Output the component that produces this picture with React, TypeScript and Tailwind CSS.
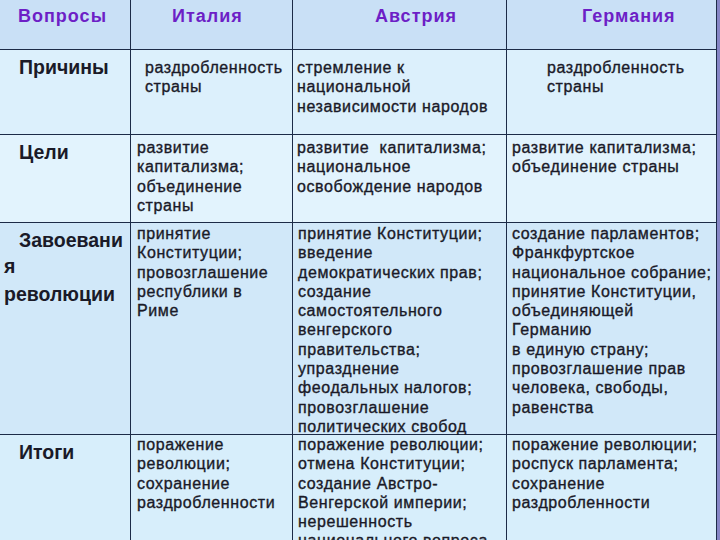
const headers = [
  { text: "Вопросы", pad: "pl-[18px]" },
  { text: "Италия", pad: "pl-[41px]" },
  { text: "Австрия", pad: "pl-[82px]" },
  { text: "Германия", pad: "pl-[75px]" },
];

type Row = {
  label: string[];
  bg: string;
  bodyPad: string;
  cells: { lines: string[]; pad: string }[];
};

const rows: Row[] = [
  {
    label: ["Причины"],
    bg: "bg-[#dcf0fc]",
    bodyPad: "pt-[8px]",
    cells: [
      { lines: ["раздробленность", "страны"], pad: "pl-[14px]" },
      { lines: ["стремление к", "национальной", "независимости народов"], pad: "pl-[4px]" },
      { lines: ["раздробленность", "страны"], pad: "pl-[40px]" },
    ],
  },
  {
    label: ["Цели"],
    bg: "bg-[#e2f3fd]",
    bodyPad: "pt-[3px]",
    cells: [
      { lines: ["развитие", "капитализма;", "объединение", "страны"], pad: "pl-[6px]" },
      { lines: ["развитие  капитализма;", "национальное", "освобождение народов"], pad: "pl-[4px]" },
      { lines: ["развитие капитализма;", "объединение страны"], pad: "pl-[5px]" },
    ],
  },
  {
    label: ["Завоевани", "я", "революции"],
    bg: "bg-[#d1e8f9]",
    bodyPad: "pt-[1px]",
    cells: [
      {
        lines: ["принятие", "Конституции;", "провозглашение", "республики в", "Риме"],
        pad: "pl-[6px]",
      },
      {
        lines: [
          "принятие Конституции;",
          "введение",
          "демократических прав;",
          "создание",
          "самостоятельного",
          "венгерского",
          "правительства;",
          "упразднение",
          "феодальных налогов;",
          "провозглашение",
          "политических свобод",
        ],
        pad: "pl-[5px]",
      },
      {
        lines: [
          "создание парламентов;",
          "Франкфуртское",
          "национальное собрание;",
          "принятие Конституции,",
          "объединяющей",
          "Германию",
          "в единую страну;",
          "провозглашение прав",
          "человека, свободы,",
          "равенства",
        ],
        pad: "pl-[5px]",
      },
    ],
  },
  {
    label: ["Итоги"],
    bg: "bg-[#d7eefb]",
    bodyPad: "pt-[0px]",
    cells: [
      { lines: ["поражение", "революции;", "сохранение", "раздробленности"], pad: "pl-[6px]" },
      {
        lines: [
          "поражение революции;",
          "отмена Конституции;",
          "создание Австро-",
          "Венгерской империи;",
          "нерешенность",
          "национального вопроса",
        ],
        pad: "pl-[5px]",
      },
      {
        lines: ["поражение революции;", "роспуск парламента;", "сохранение", "раздробленности"],
        pad: "pl-[5px]",
      },
    ],
  },
];

export default function App() {
  return (
    <div className="flex h-[540px] w-[720px] overflow-hidden bg-[#1c2b47] font-['Liberation_Sans',Arial,sans-serif]">
      <div className="grid h-full grid-cols-[130px_161px_213px_209px] grid-rows-[49px_84px_87px_211px_1fr] gap-px border-r border-[#1c2b47]">
        {headers.map((h) => (
          <div
            key={h.text}
            className={`bg-[#c9e0f6] pt-[5px] text-[18px] font-bold leading-[22px] tracking-[1px] text-[#6d1fc6] ${h.pad}`}
          >
            {h.text}
          </div>
        ))}

        {rows.map((row) => (
          <div key={row.label.join("")} className="contents">
            <div
              className={`${row.bg} pl-[4px] pt-[4px] text-[19.5px] font-bold leading-[26px] text-[#1a1a28]`}
            >
              {row.label.map((l, i) => (
                <div key={i} className={i === 0 ? "pl-[15px]" : i === 2 ? "mt-[2px]" : ""}>
                  {l}
                </div>
              ))}
            </div>
            {row.cells.map((cell, ci) => (
              <div
                key={ci}
                className={`${row.bg} ${row.bodyPad} ${cell.pad} text-[16px] leading-[19.3px] tracking-[0.6px] text-[#1a1a28] [-webkit-text-stroke:0.35px_#1a1a28]`}
              >
                {cell.lines.map((line, li) => (
                  <div key={li} className="whitespace-pre">
                    {line}
                  </div>
                ))}
              </div>
            ))}
          </div>
        ))}
      </div>
      <div className="w-[3px] bg-[#8585c5]" />
    </div>
  );
}
